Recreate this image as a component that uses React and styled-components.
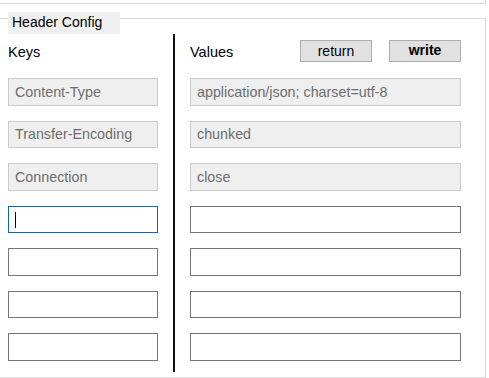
import React from 'react'
import styled, { createGlobalStyle } from 'styled-components'

const GlobalStyle = createGlobalStyle`
html, body {
  margin: 0;
  padding: 0;
  background: #fff;
  overflow: hidden;
}
body {
  font-family: "Liberation Sans", Arial, sans-serif;
  font-size: 14px;
  color: #000;
}
`

const Page = styled.div`
width: 488px;
margin-left: -2px;
`

const PrevSection = styled.div`
height: 4px;
box-sizing: border-box;
border: 1px solid #d9d9d9;
border-top: none;
`

const Panel = styled.section`
margin-top: 14px;
height: 360px;
box-sizing: border-box;
border: 1px solid #d9d9d9;
`

const Title = styled.div`
width: 108px;
height: 22px;
margin: -7px 0 0 9px;
padding-left: 4px;
line-height: 20px;
background: #efefef;
`

const Columns = styled.div`
display: flex;
height: 338px;
padding-left: 9px;
`

const Column = styled.div`
width: ${props => props.width}px;
display: flex;
flex-direction: column;
`

const Divider = styled.div`
width: 2px;
margin: 0 15px;
height: 338px;
background: #111;
`

const HeaderRow = styled.div`
display: flex;
align-items: center;
height: 22px;
margin-top: 6px;
margin-bottom: 1px;
`

const Label = styled.span`
font-size: 14.5px;
padding-top: 2px;
`

const Buttons = styled.div`
display: flex;
gap: 17px;
margin-left: auto;
`

const Button = styled.button`
width: 72px;
height: 22px;
box-sizing: border-box;
padding: 0 0 ${props => props.bold ? 3 : 0}px;
background: #e1e1e1;
border: 1px solid #adadad;
font-family: inherit;
font-size: 14px;
font-weight: ${props => props.bold ? 700 : 400};
color: #000;
`

const Field = styled.div`
position: relative;
margin-top: 15px;
height: 27.5px;
`

const Input = styled.input`
display: block;
width: 100%;
height: 100%;
box-sizing: border-box;
margin: 0;
padding: 0 6px;
font-family: inherit;
font-size: 14.3px;
outline: none;
color: ${props => props.readOnly ? '#6d6d6d' : '#000'};
background: ${props => props.readOnly ? '#efefef' : '#fff'};
border: 1px solid ${props => props.readOnly ? '#cbcbcb' : props.focused ? '#0a66c2' : '#767676'};
`

const Caret = styled.span`
position: absolute;
left: 7px;
top: 6px;
width: 1px;
height: 16px;
background: #000;
`

const rows = [
  ['Content-Type', 'application/json; charset=utf-8'],
  ['Transfer-Encoding', 'chunked'],
  ['Connection', 'close'],
  ['', ''],
  ['', ''],
  ['', ''],
  ['', ''],
]

const App = () => {
  return (
    <>
      <GlobalStyle />
      <Page>
        <PrevSection />
        <Panel>
          <Title>Header Config</Title>
          <Columns>
            <Column width={150}>
              <HeaderRow>
                <Label>Keys</Label>
              </HeaderRow>
              {rows.map(([key], i) => (
                <Field key={i}>
                  <Input readOnly={i < 3} focused={i === 3} defaultValue={key} />
                  {i === 3 && <Caret />}
                </Field>
              ))}
            </Column>
            <Divider />
            <Column width={271}>
              <HeaderRow>
                <Label>Values</Label>
                <Buttons>
                  <Button>return</Button>
                  <Button bold>write</Button>
                </Buttons>
              </HeaderRow>
              {rows.map(([, value], i) => (
                <Field key={i}>
                  <Input readOnly={i < 3} defaultValue={value} />
                </Field>
              ))}
            </Column>
          </Columns>
        </Panel>
      </Page>
    </>
  )
}

export default App
